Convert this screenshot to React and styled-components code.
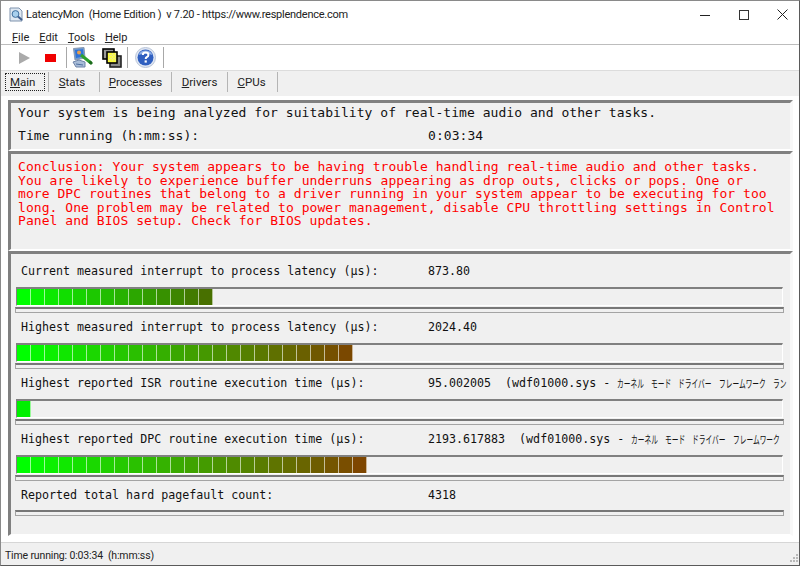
import React from "react";
import styled, { createGlobalStyle } from "styled-components";

const Global = createGlobalStyle`
  html, body { margin: 0; padding: 0; background: #fff; }
  #root { width: 800px; height: 566px; overflow: hidden; }
`;

const UI = `Roboto, "Open Sans", sans-serif`;
const MONO = `"DejaVu Sans Mono", monospace`;

const Window = styled.div`
  box-sizing: border-box;
  width: 800px;
  height: 566px;
  display: flex;
  flex-direction: column;
  background: #fff;
  border-top: 1px solid #8a8a8a;
  border-left: 1px solid #8a8a8a;
  border-right: 1px solid #5a5a5a;
  border-bottom: 1px solid #5a5a5a;
  font-family: ${UI};
  color: #111;
  overflow: hidden;
`;
const TitleBar = styled.div`
  height: 27px;
  display: flex;
  align-items: center;
  padding-left: 8px;
  font-size: 11px;
  letter-spacing: -0.25px;
  flex: none;
`;
const TitleText = styled.span`
  margin-left: 2px;
  white-space: pre;
  color: #222;
  flex: 1;
`;
const WinButton = styled.div`
  width: 39px;
  height: 27px;
  display: flex;
  align-items: center;
  justify-content: center;
  flex: none;
`;
const WinControls = styled.div`
  display: flex;
  margin-right: -3px;
`;
const MenuBar = styled.div`
  height: 16px;
  display: flex;
  align-items: center;
  padding: 2px 0 0 11px;
  box-sizing: border-box;
  gap: 10px;
  font-size: 11px;
  flex: none;
`;
const MenuItem = styled.span`
  color: #222;
`;
const Toolbar = styled.div`
  height: 25px;
  border-top: 1px solid #bdbdbd;
  display: flex;
  align-items: center;
  flex: none;
`;
const ToolSlot = styled.div`
  box-sizing: border-box;
  width: ${(p) => p.$w}px;
  height: 100%;
  display: flex;
  align-items: center;
  justify-content: ${(p) => (p.$pad !== undefined ? "flex-start" : "center")};
  padding-left: ${(p) => p.$pad || 0}px;
  flex: none;
`;
const ToolSep = styled.div`
  width: 1px;
  height: 21px;
  background: #a8a8a8;
  flex: none;
`;
const TabBar = styled.div`
  height: 26px;
  background: #f0f0f0;
  border-top: 1px solid #dcdcdc;
  box-sizing: border-box;
  display: flex;
  align-items: flex-start;
  padding: 1px 0 0 3px;
  font-size: 11.5px;
  flex: none;
`;
const Tab = styled.div`
  box-sizing: border-box;
  width: ${(p) => p.$w}px;
  height: 20px;
  display: flex;
  align-items: center;
  justify-content: ${(p) => (p.$active ? "flex-start" : "center")};
  padding-right: ${(p) => p.$shift || 0}px;
  border-right: 1px solid #b4b4b4;
  color: #222;
  flex: none;
`;
const FocusBox = styled.span`
  box-sizing: border-box;
  width: 40px;
  height: 18px;
  border: 1px dotted #222;
  display: flex;
  align-items: center;
  padding-left: 4px;
  margin-left: 1px;
`;
const Content = styled.div`
  flex: 1;
  min-height: 0;
  background: #fff;
  padding: 4px 6px 4px 7px;
  display: flex;
  flex-direction: column;
`;
const Panel = styled.div`
  box-sizing: border-box;
  height: ${(p) => p.$h}px;
  flex: none;
  background: #f0f0f0;
  border-top: 3px solid #808080;
  border-left: 3px solid #808080;
  border-right: 3px solid #f8f8f8;
  border-bottom: 2px solid #fff;
  font-family: ${MONO};
  overflow: hidden;
`;
const StatusHead = styled.div`
  padding: 0 0 0 7px;
  font-size: 13px;
  letter-spacing: 0.05px;
  color: #111;
  display: flex;
  flex-direction: column;
  gap: 3px;
`;
const StatusLine = styled.div`
  height: 20px;
  line-height: 20px;
  display: flex;
  white-space: pre;
`;
const StatusLabel = styled.span`
  width: 410px;
  flex: none;
`;
const Conclusion = styled.p`
  margin: 0;
  padding: 6px 8px 0 7px;
  font-size: 13px;
  letter-spacing: 0.054px;
  line-height: 13.5px;
  color: #f00;
  white-space: pre;
`;
const MetricList = styled.div`
  padding: 3px 0 0 5px;
  display: flex;
  flex-direction: column;
`;
const Metric = styled.div`
  height: 56px;
  padding-top: 6px;
  box-sizing: border-box;
  flex: none;
`;
const MetricHead = styled.div`
  height: 16px;
  line-height: 16px;
  display: flex;
  white-space: pre;
  width: 772px;
  padding-left: 5px;
  margin-bottom: ${(p) => (p.$last ? 7 : 8)}px;
  box-sizing: border-box;
  font-size: 11.65px;
  color: #111;
`;
const MetricLabel = styled.span`
  width: 407px;
  flex: none;
`;
const MetricValue = styled.span`
  flex: none;
`;
const JpWord = styled.span`
  display: inline-block;
  width: ${(p) => p.$n * 6.7}px;
  height: 16px;
  vertical-align: top;
  font-family: "Noto Sans CJK JP", sans-serif;
  font-size: 11px;
  white-space: nowrap;
  transform: scaleX(0.61);
  transform-origin: left center;
`;
const Track = styled.div`
  box-sizing: border-box;
  width: 767px;
  height: 19px;
  border-top: 2px solid #808080;
  border-left: 1px solid #808080;
  border-bottom: 1px solid #fff;
  border-right: 1px solid #fff;
  display: flex;
  margin-bottom: 1px;
`;
const Segment = styled.div`
  box-sizing: border-box;
  width: 14px;
  height: 16px;
  border-right: 1px solid rgba(255, 255, 255, 0.6);
  flex: none;
`;
const MiniBar = styled.div`
  box-sizing: border-box;
  width: 769px;
  margin-left: -1px;
  height: 6px;
  background: #f0f0f0;
  border: 1px solid #a4a4a4;
  border-top: 2px solid #777;
`;
const StatusBar = styled.div`
  position: relative;
  height: 23px;
  background: #f0f0f0;
  border-top: 1px solid #d6d6d6;
  display: flex;
  align-items: center;
  padding: 2px 0 0 4px;
  box-sizing: border-box;
  font-size: 10.5px;
  letter-spacing: -0.15px;
  color: #222;
  white-space: pre;
  flex: none;
`;
const Grip = styled.svg`
  position: absolute;
  right: 1px;
  bottom: 1px;
`;

function segmentColor(i, n) {
  const ends = { 1: [0, 240, 0], 14: [72, 112, 0], 24: [122, 72, 0], 25: [126, 70, 0] };
  const e = ends[n];
  const t = n > 1 ? i / (n - 1) : 1;
  const r = Math.round(e[0] * t);
  const g = Math.round(255 + (e[1] - 255) * t);
  return `rgb(${r},${g},0)`;
}

const Bar = ({ n }) => (
  <Track>
    {Array.from({ length: n }, (_, i) => (
      <Segment key={i} style={{ background: segmentColor(i, n) }} />
    ))}
  </Track>
);

const JpWords = ({ words }) =>
  words.map((w, i) => (
    <React.Fragment key={w}>
      {i > 0 ? " " : ""}
      <JpWord $n={w.length}>{w}</JpWord>
    </React.Fragment>
  ));

const MonitorIcon = () => (
  <svg width="21" height="21" viewBox="0 0 21 21">
    <path d="M1.5 1.5 L12 .5 L13 11 L3 13 Z" fill="#6f9bd0" stroke="#8a98ae" />
    <path d="M3 3 L11 2.2 L11.6 9.5 L4 11 Z" fill="#2f73d8" />
    <circle cx="7" cy="5.5" r="2" fill="#e8a050" />
    <path d="M1 15 L7 13 L13 15 L13 20 L4 20 Z" fill="#a8bcd8" stroke="#6f84a8" />
    <path d="M4 17 L11 18" stroke="#4f6f9f" />
    <path d="M9 8 L19 16" stroke="#2ea02e" strokeWidth="3" />
    <path d="M17.5 14.5 L20 17" stroke="#1c6c1c" strokeWidth="3" />
  </svg>
);
const WindowsIcon = () => (
  <svg width="20" height="20" viewBox="0 0 20 20">
    <rect x="1" y="1" width="11" height="10" fill="#9a9a9a" stroke="#000" strokeWidth="1.6" />
    <rect x="8" y="8" width="11" height="11" fill="#8a8a8a" stroke="#222" strokeWidth="1.6" />
    <rect x="5" y="4" width="10" height="11" fill="#fbfb40" stroke="#000" strokeWidth="1.6" />
    <path d="M7 6h1M10 6h1M13 6h1M7 9h1M10 9h1M13 9h1M7 12h1M10 12h1M13 12h1M8.5 7.5h1M11.5 7.5h1M8.5 10.5h1M11.5 10.5h1" stroke="#d8d8d8" />
  </svg>
);
const HelpIcon = () => (
  <svg width="21" height="21" viewBox="0 0 21 21">
    <circle cx="10.5" cy="10.5" r="10" fill="#dfe6f2" stroke="#b8c4d8" />
    <circle cx="10.5" cy="10.5" r="8" fill="#2f5fc0" />
    <path d="M3.5 8 A7.5 7 0 0 1 17.5 8 Q10.5 5 3.5 8 Z" fill="#8fb0e8" />
    <path d="M7.8 8 Q8 5.6 10.7 5.6 Q13.4 5.6 13.4 7.9 Q13.4 9.3 11.8 10.2 Q10.7 10.8 10.7 12" fill="none" stroke="#fff" strokeWidth="2" />
    <rect x="9.6" y="13.4" width="2.2" height="2.2" fill="#fff" />
  </svg>
);
const AppIcon = () => (
  <svg width="15" height="15" viewBox="0 0 15 15">
    <path d="M1 1 H10 L13 4 V14 H1 Z" fill="#dfe8f2" stroke="#7f93ad" />
    <circle cx="6.5" cy="7" r="3.4" fill="#a8d0ee" stroke="#3f6f9f" />
    <path d="M9 9.5 L13 13" stroke="#3f5f8f" strokeWidth="2" />
  </svg>
);

export default function App() {
  return (
    <>
      <Global />
      <Window>
        <TitleBar>
          <AppIcon />
          <TitleText>{"LatencyMon  (Home Edition )  v 7.20 - https://www.resplendence.com"}</TitleText>
          <WinControls>
            <WinButton>
              <svg width="10" height="10" viewBox="0 0 10 10"><path d="M0 5.5H10" stroke="#222" /></svg>
            </WinButton>
            <WinButton>
              <svg width="10" height="10" viewBox="0 0 10 10"><rect x=".5" y=".5" width="9" height="9" fill="none" stroke="#333" /></svg>
            </WinButton>
            <WinButton>
              <svg width="11" height="11" viewBox="0 0 11 11"><path d="M.5.5L10.5 10.5M10.5.5L.5 10.5" stroke="#222" /></svg>
            </WinButton>
          </WinControls>
        </TitleBar>
        <MenuBar>
          <MenuItem><u>F</u>ile</MenuItem>
          <MenuItem><u>E</u>dit</MenuItem>
          <MenuItem><u>T</u>ools</MenuItem>
          <MenuItem><u>H</u>elp</MenuItem>
        </MenuBar>
        <Toolbar>
          <ToolSlot $w={44} $pad={17}>
            <svg width="12" height="12" viewBox="0 0 12 12"><path d="M1 0L12 6L1 12Z" fill="#aaa" /></svg>
          </ToolSlot>
          <ToolSlot $w={21} $pad={0}>
            <svg width="11" height="8" viewBox="0 0 11 8"><rect width="11" height="8" fill="#f00000" /></svg>
          </ToolSlot>
          <ToolSep />
          <ToolSlot $w={30}><MonitorIcon /></ToolSlot>
          <ToolSlot $w={30}><WindowsIcon /></ToolSlot>
          <ToolSep />
          <ToolSlot $w={35}><HelpIcon /></ToolSlot>
          <ToolSep />
        </Toolbar>
        <TabBar>
          <Tab $w={45} $active><FocusBox><u>M</u>ain</FocusBox></Tab>
          <Tab $w={51} $shift={4}><span><u>S</u>tats</span></Tab>
          <Tab $w={72}><span><u>P</u>rocesses</span></Tab>
          <Tab $w={56}><span><u>D</u>rivers</span></Tab>
          <Tab $w={50} $shift={2}><span><u>C</u>PUs</span></Tab>
        </TabBar>
        <Content>
          <Panel $h={51}>
            <StatusHead>
              <StatusLine>Your system is being analyzed for suitability of real-time audio and other tasks.</StatusLine>
              <StatusLine><StatusLabel>Time running (h:mm:ss):</StatusLabel><span>0:03:34</span></StatusLine>
            </StatusHead>
          </Panel>
          <Panel $h={100}>
            <Conclusion>{`Conclusion: Your system appears to be having trouble handling real-time audio and other tasks.
You are likely to experience buffer underruns appearing as drop outs, clicks or pops. One or
more DPC routines that belong to a driver running in your system appear to be executing for too
long. One problem may be related to power management, disable CPU throttling settings in Control
Panel and BIOS setup. Check for BIOS updates.`}</Conclusion>
          </Panel>
          <Panel $h={285}>
            <MetricList>
              <Metric>
                <MetricHead><MetricLabel>Current measured interrupt to process latency (µs):</MetricLabel><MetricValue>873.80</MetricValue></MetricHead>
                <Bar n={14} />
                <MiniBar />
              </Metric>
              <Metric>
                <MetricHead><MetricLabel>Highest measured interrupt to process latency (µs):</MetricLabel><MetricValue>2024.40</MetricValue></MetricHead>
                <Bar n={24} />
                <MiniBar />
              </Metric>
              <Metric>
                <MetricHead>
                  <MetricLabel>Highest reported ISR routine execution time (µs):</MetricLabel>
                  <MetricValue>{"95.002005  (wdf01000.sys - "}<JpWords words={["カーネル", "モード", "ドライバー", "フレームワーク", "ラン"]} /></MetricValue>
                </MetricHead>
                <Bar n={1} />
                <MiniBar />
              </Metric>
              <Metric>
                <MetricHead>
                  <MetricLabel>Highest reported DPC routine execution time (µs):</MetricLabel>
                  <MetricValue>{"2193.617883  (wdf01000.sys - "}<JpWords words={["カーネル", "モード", "ドライバー", "フレームワーク"]} /></MetricValue>
                </MetricHead>
                <Bar n={25} />
                <MiniBar />
              </Metric>
              <Metric>
                <MetricHead $last><MetricLabel>Reported total hard pagefault count:</MetricLabel><MetricValue>4318</MetricValue></MetricHead>
                <MiniBar />
              </Metric>
            </MetricList>
          </Panel>
        </Content>
        <StatusBar>
          {"Time running: 0:03:34  (h:mm:ss)"}
          <Grip width="11" height="11" viewBox="0 0 11 11">
            <path d="M9 1h2v2H9zM6 4h2v2H6zM9 4h2v2H9zM3 7h2v2H3zM6 7h2v2H6zM9 7h2v2H9z" fill="#b8b8b8" />
          </Grip>
        </StatusBar>
      </Window>
    </>
  );
}
